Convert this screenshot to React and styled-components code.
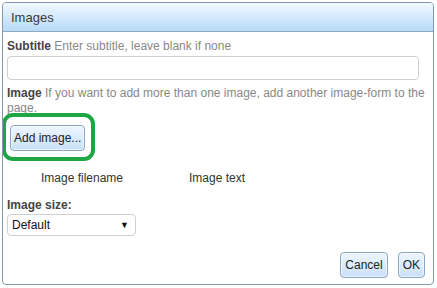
import React from "react"
import styled, { createGlobalStyle } from "styled-components"

const GlobalStyle = createGlobalStyle`
  body {
    margin: 0;
    background: #fff;
    font-family: "Liberation Sans", Arial, sans-serif;
  }
`

const Dialog = styled.div`
  margin: 2px 0 0 2px;
  width: 430px;
  height: 281px;
  border: 1px solid #8198ad;
  border-radius: 4px;
  background: #fff;
  display: flex;
  flex-direction: column;
  overflow: hidden;
`

const Header = styled.div`
  height: 28px;
  flex: none;
  display: flex;
  align-items: center;
  padding-left: 8px;
  background: linear-gradient(#f2f8ff, #b8daf8);
  border-bottom: 1px solid #8fa9c2;
  color: #3a3a3a;
  font-size: 13px;
`

const Body = styled.div`
  flex: 1;
  display: flex;
  flex-direction: column;
  padding: 7px 4px 6px 4px;
  font-size: 12px;
  color: #333;
`

const Label = styled.div`
  line-height: 15px;
  b {
    color: #444;
  }
  span {
    color: #888;
  }
`

const TextInput = styled.input`
  margin: 2px 0 6px 0;
  width: 412px;
  height: 24px;
  box-sizing: border-box;
  border: 1px solid #cfcfcf;
  border-radius: 4px;
`

const AddWrap = styled.div`
  position: relative;
  display: flex;
  margin: 9px 0 0 3px;
  align-self: flex-start;
`

const Ring = styled.div`
  position: absolute;
  left: -8px;
  right: -10px;
  top: -12px;
  bottom: -10px;
  border: 4px solid #1ea645;
  border-radius: 11px;
`

const Button = styled.button`
  height: 26px;
  padding: 0 ${p => p.$pad || 4}px;
  font-family: "Liberation Sans", Arial, sans-serif;
  font-size: 12px;
  color: #222;
  border: 1px solid #8aa6c4;
  border-radius: 4px;
  background: linear-gradient(#eef6ff, #c9e0f7);
  box-shadow: inset 0 0 0 1px rgba(255, 255, 255, 0.6);
`

const Columns = styled.div`
  display: flex;
  margin: 20px 0 0 34px;
  line-height: 15px;
  span:first-child {
    width: 148px;
  }
`

const SizeLabel = styled.div`
  margin-top: 12px;
  font-weight: bold;
  color: #444;
  line-height: 15px;
`

const Select = styled.div`
  margin-top: 1px;
  width: 129px;
  height: 22px;
  box-sizing: border-box;
  border: 1px solid #cfcfcf;
  border-radius: 4px;
  display: flex;
  align-items: center;
  justify-content: space-between;
  padding: 0 6px 0 4px;
  color: #111;
  font-size: 12px;
  i {
    font-style: normal;
    font-size: 9px;
  }
`

const Footer = styled.div`
  margin-top: auto;
  display: flex;
  justify-content: flex-end;
  gap: 10px;
  padding-right: 4px;
`

const App = () => {
  return (
    <>
      <GlobalStyle />
      <Dialog>
        <Header>Images</Header>
        <Body>
          <Label>
            <b>Subtitle</b> <span>Enter subtitle, leave blank if none</span>
          </Label>
          <TextInput />
          <Label>
            <b>Image</b>{" "}
            <span>
              If you want to add more than one image, add another image-form to
              the page.
            </span>
          </Label>
          <AddWrap>
            <Ring />
            <Button $pad={3}>Add image...</Button>
          </AddWrap>
          <Columns>
            <span>Image filename</span>
            <span>Image text</span>
          </Columns>
          <SizeLabel>Image size:</SizeLabel>
          <Select>
            Default <i>▼</i>
          </Select>
          <Footer>
            <Button>Cancel</Button>
            <Button>OK</Button>
          </Footer>
        </Body>
      </Dialog>
    </>
  )
}

export default App
